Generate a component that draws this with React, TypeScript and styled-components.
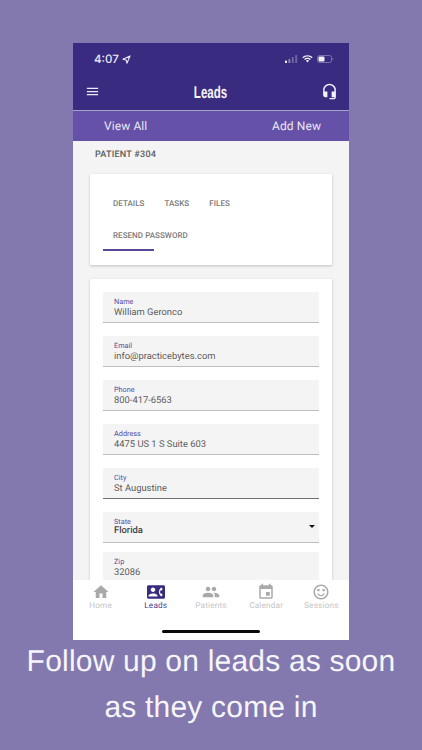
import React from "react";
import styled, { createGlobalStyle } from "styled-components";
import {
  MdContactPhone,
  MdEvent,
  MdHeadsetMic,
  MdHome,
  MdMenu,
  MdPeople,
  MdSentimentSatisfiedAlt,
} from "react-icons/md";

const Global = createGlobalStyle`
  html, body { margin: 0; padding: 0; background: #8379af; }
  * { box-sizing: border-box; }
  body { text-rendering: geometricPrecision; }
`;

const Page = styled.div`
  width: 422px;
  height: 750px;
  overflow: hidden;
  background: #8379af;
  display: flex;
  flex-direction: column;
  align-items: center;
  padding-top: 43px;
  font-family: Roboto, sans-serif;
`;

const Phone = styled.div`
  width: 276px;
  height: 597px;
  background: #f4f4f4;
  display: flex;
  flex-direction: column;
  overflow: hidden;
  flex: none;
`;

const Header = styled.header`
  height: 67px;
  background: #392b7f;
  color: #fff;
  flex: none;
  display: flex;
  flex-direction: column;
`;

const StatusBar = styled.div`
  height: 24px;
  padding: 0 15px 0 21px;
  display: flex;
  align-items: flex-end;
  justify-content: space-between;
`;

const Time = styled.div`
  font: 500 11.5px/16px Inter, sans-serif;
  color: #eeeaf6;
  display: flex;
  align-items: center;
  gap: 3px;
`;

const StatusIcons = styled.div`
  display: flex;
  align-items: center;
  gap: 4px;
  height: 16px;
`;

const TitleBar = styled.div`
  flex: 1;
  padding: 5px 11px 0 12px;
  display: flex;
  align-items: center;
  justify-content: space-between;
`;

const Title = styled.h1`
  margin: 0;
  padding-top: 4px;
  font: 700 17px/20px "Liberation Sans", sans-serif;
  color: #f4f2f8;
  transform: scaleX(0.68);
`;

const SubBar = styled.nav`
  height: 31px;
  flex: none;
  border-top: 1px solid #a9a2c8;
  background: #6651a9;
  padding: 0 28px 0 31px;
  display: flex;
  align-items: center;
  justify-content: space-between;
  font: 400 12px/16px Roboto, sans-serif;
  letter-spacing: 0.1px;
  color: #e9e6f3;
`;

const Scroll = styled.main`
  flex: 1;
  min-height: 0;
  overflow: hidden;
  padding: 6px 17px 0;
`;

const PatientLabel = styled.div`
  font: 500 9.1px/16px Roboto, sans-serif;
  letter-spacing: 0.2px;
  color: #5c5c5c;
  padding-left: 5px;
  margin-bottom: 11px;
  text-transform: uppercase;
`;

const Card = styled.section`
  background: #fff;
  box-shadow: 0 1px 3px rgba(0, 0, 0, 0.22);
  border-radius: 1px;
  margin-bottom: 14px;
`;

const Tabs = styled(Card)`
  height: 91px;
  padding: 13px 13px 0;
  display: flex;
  flex-wrap: wrap;
  align-content: flex-start;
`;

const Tab = styled.div<{ $active?: boolean }>`
  height: 32px;
  padding: 2px 10px 0;
  display: flex;
  align-items: center;
  font: 500 8px/12px Roboto, sans-serif;
  letter-spacing: 0.05px;
  color: #7a7a7a;
  white-space: nowrap;
  position: relative;
  width: ${(p) => (p.$active ? "100%" : "auto")};
  &::after {
    content: "";
    display: ${(p) => (p.$active ? "block" : "none")};
    position: absolute;
    left: 0;
    bottom: 0;
    width: 51px;
    height: 2px;
    background: #5a4797;
  }
`;

const FormCard = styled(Card)`
  padding: 13px 13px 0;
  display: flex;
  flex-direction: column;
`;

const Field = styled.div<{ $strong?: boolean; $tight?: boolean }>`
  height: 31px;
  flex: none;
  margin-bottom: ${(p) => (p.$tight ? "9px" : "13px")};
  background: #f4f4f4;
  border-bottom: 1px solid ${(p) => (p.$strong ? "#6f6f6f" : "#bdbdbd")};
  border-radius: 2px 2px 0 0;
  padding: 6px 11px 0;
  position: relative;
`;

const FieldLabel = styled.div`
  font: 400 7.3px/8px Roboto, sans-serif;
  color: #5b4a9c;
`;

const FieldValue = styled.div<{ $bold?: boolean }>`
  margin-top: ${(p) => (p.$bold ? "-1px" : "1px")};
  font: ${(p) => (p.$bold ? 500 : 400)} 9.4px/12px Roboto, sans-serif;
  color: ${(p) => (p.$bold ? "#444" : "#5c5c5c")};
`;

const Caret = styled.div`
  position: absolute;
  right: 4px;
  top: 13px;
  width: 0;
  height: 0;
  border-left: 3px solid transparent;
  border-right: 3px solid transparent;
  border-top: 3.5px solid #111;
`;

const BottomNav = styled.footer`
  height: 60px;
  flex: none;
  background: #fff;
  display: flex;
  flex-direction: column;
`;

const NavItems = styled.div`
  height: 50px;
  padding-top: 3px;
  display: grid;
  grid-template-columns: repeat(5, 1fr);
`;

const NavItem = styled.div<{ $active?: boolean }>`
  display: flex;
  flex-direction: column;
  align-items: center;
  & > svg {
    color: ${(p) => (p.$active ? "#392b7f" : "#a9a9a9")};
    display: block;
  }
`;

const NavLabel = styled.div<{ $active?: boolean }>`
  margin-top: -1px;
  font: 400 8.2px/12px Roboto, sans-serif;
  letter-spacing: 0.2px;
  color: ${(p) => (p.$active ? "#4c3d8e" : "#c4c4c4")};
`;

const HomeBar = styled.div`
  width: 98px;
  height: 3px;
  border-radius: 2px;
  background: #0a0a0a;
  align-self: center;
`;

const Caption = styled.div`
  width: 100%;
  margin-top: -1px;
  text-align: center;
  font: 400 30px/46px "Liberation Sans", Arial, sans-serif;
  letter-spacing: 0.2px;
  color: #f6f5fa;
  flex: none;
`;

const LocationArrow = () => (
  <svg width="9" height="9" viewBox="0 0 10 10" fill="none" stroke="#eeeaf6" strokeWidth="1.2" strokeLinejoin="round">
    <path d="M9 1 1 4.6l3.6.9.9 3.6z" />
  </svg>
);

const Signal = () => (
  <svg width="13" height="8" viewBox="0 0 13 8">
    <rect x="0" y="5.5" width="2" height="2.5" rx="0.5" fill="#eee" />
    <rect x="3.4" y="4" width="2" height="4" rx="0.5" fill="#8c83b5" />
    <rect x="6.8" y="2" width="2" height="6" rx="0.5" fill="#6f64a3" />
    <rect x="10.2" y="0" width="2" height="8" rx="0.5" fill="#6f64a3" />
  </svg>
);

const Wifi = () => (
  <svg width="11" height="8" viewBox="0 0 12 9" fill="#f4f2f8">
    <path d="M6 1.8c1.900 0 3.500.7 4.800 1.900l1-1.100C10.500 1.200 8.400.3 6 .3S1.500 1.200.2 2.600l1 1.100C2.500 2.500 4.100 1.800 6 1.800z" />
    <path d="M6 4.500c1.100 0 2.100.4 2.800 1.100l1-1.100C8.800 3.600 7.500 3 6 3s-2.800.6-3.800 1.500l1 1.100C3.900 4.900 4.900 4.500 6 4.500z" />
    <path d="M6 5.700c-.7 0-1.300.2-1.800.7L6 8.500l1.800-2.100c-.5-.5-1.100-.7-1.800-.7z" />
  </svg>
);

const Battery = () => (
  <svg width="17" height="8" viewBox="0 0 17 8">
    <rect x="0.5" y="0.5" width="14" height="7" rx="2" fill="none" stroke="#7d72ad" />
    <rect x="1.500" y="1.500" width="6" height="5" rx="1" fill="#f4f2f8" />
    <path d="M15.500 2.800c.7.2 1 .7 1 1.200s-.3 1-1 1.200z" fill="#7d72ad" />
  </svg>
);

const fields = [
  { label: "Name", value: "William Geronco" },
  { label: "Email", value: "info@practicebytes.com" },
  { label: "Phone", value: "800-417-6563" },
  { label: "Address", value: "4475 US 1 S Suite 603" },
  { label: "City", value: "St Augustine", strong: true },
];

const navItems = [
  { label: "Home", Icon: MdHome },
  { label: "Leads", Icon: MdContactPhone, active: true },
  { label: "Patients", Icon: MdPeople },
  { label: "Calendar", Icon: MdEvent },
  { label: "Sessions", Icon: MdSentimentSatisfiedAlt },
];

export default function App() {
  return (
    <Page>
      <Global />
      <Phone>
        <Header>
          <StatusBar>
            <Time>
              4:07 <LocationArrow />
            </Time>
            <StatusIcons>
              <Signal />
              <Wifi />
              <Battery />
            </StatusIcons>
          </StatusBar>
          <TitleBar>
            <MdMenu size={15} color="#ece9f5" />
            <Title>Leads</Title>
            <MdHeadsetMic size={17} color="#f4f2f8" />
          </TitleBar>
        </Header>
        <SubBar>
          <span>View All</span>
          <span>Add New</span>
        </SubBar>
        <Scroll>
          <PatientLabel>Patient #304</PatientLabel>
          <Tabs>
            <Tab>DETAILS</Tab>
            <Tab>TASKS</Tab>
            <Tab>FILES</Tab>
            <Tab $active>RESEND PASSWORD</Tab>
          </Tabs>
          <FormCard>
            {fields.map((f) => (
              <Field key={f.label} $strong={f.strong}>
                <FieldLabel>{f.label}</FieldLabel>
                <FieldValue>{f.value}</FieldValue>
              </Field>
            ))}
            <Field $tight>
              <FieldLabel>State</FieldLabel>
              <FieldValue $bold>Florida</FieldValue>
              <Caret />
            </Field>
            <Field>
              <FieldLabel>Zip</FieldLabel>
              <FieldValue>32086</FieldValue>
            </Field>
          </FormCard>
        </Scroll>
        <BottomNav>
          <NavItems>
            {navItems.map(({ label, Icon, active }) => (
              <NavItem key={label} $active={active}>
                <Icon size={18} />
                <NavLabel $active={active}>{label}</NavLabel>
              </NavItem>
            ))}
          </NavItems>
          <HomeBar />
        </BottomNav>
      </Phone>
      <Caption>
        Follow up on leads as soon
        <br />
        as they come in
      </Caption>
    </Page>
  );
}
